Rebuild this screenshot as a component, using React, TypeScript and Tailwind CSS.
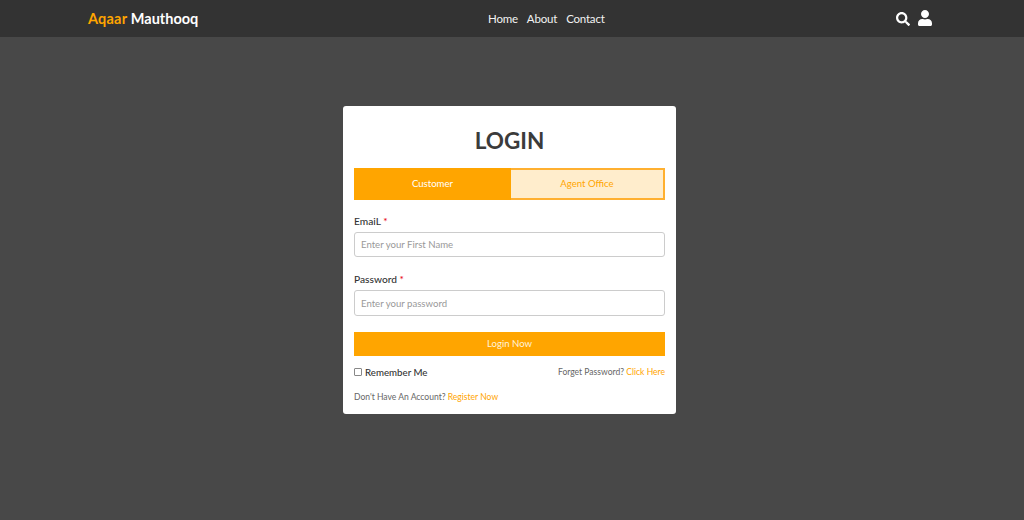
import { FaSearch, FaUser } from "react-icons/fa";

function Label({ text }: { text: string }) {
  return (
    <label className="block text-[10.2px] leading-[16px] font-medium text-[#333]">
      {text} <span className="text-red-600">*</span>
    </label>
  );
}

export default function App() {
  return (
    <div className="min-h-[520px] bg-[#484848] font-['Lato',sans-serif]">
      {/* Navbar */}
      <header className="flex h-[37px] items-center bg-[#333333] pl-[88px] pr-[91px]">
        <div className="w-[340px] text-[14.5px] font-bold text-white">
          <span className="tracking-[0.2px] text-[#ffa500]">Aqaar</span> Mauthooq
        </div>
        <nav className="ml-[60px] flex gap-[9px] text-[11.5px] tracking-[-0.2px] text-[#f2f2f2]">
          <a>Home</a>
          <a>About</a>
          <a>Contact</a>
        </nav>
        <div className="ml-auto flex items-center gap-[7px] text-white">
          <FaSearch size={14} />
          <FaUser size={16} className="-mt-[2px]" />
        </div>
      </header>

      {/* Login card */}
      <main className="flex justify-center pt-[69px] pr-[5px]">
        <div className="h-[308px] w-[333px] rounded-[3px] bg-white px-[11px]">
          <h1 className="pt-[21px] text-center text-[22.5px] leading-[28px] font-bold text-[#3b3b3b]">LOGIN</h1>

          <div className="mt-[13px] flex h-[32px] border-2 border-[#ffb030] text-[9.6px]">
            <div className="-m-[2px] flex w-[157px] items-center justify-center bg-[#ffa500] pt-[1px] text-white">Customer</div>
            <div className="ml-[2px] flex flex-1 items-center justify-center bg-[#ffedcc] pt-[1px] text-[#ffa500]">Agent Office</div>
          </div>

          <div className="mt-[13px]">
            <Label text="EmaiL" />
            <input
              className="mt-[3px] h-[25px] w-full rounded-[3px] border border-[#ccc] px-[6px] text-[9.6px] placeholder:text-[#999]"
              placeholder="Enter your First Name"
            />
          </div>
          <div className="mt-[14px]">
            <Label text="Password" />
            <input
              className="mt-[3px] h-[26px] w-full rounded-[3px] border border-[#ccc] px-[6px] text-[9.6px] placeholder:text-[#999]"
              placeholder="Enter your password"
            />
          </div>

          <button className="mt-[16px] h-[24px] w-full bg-[#ffa500] text-[9.6px] text-[#fff3dc]">Login Now</button>

          <div className="mt-[8px] flex h-[16px] items-center justify-between">
            <label className="flex items-center gap-[3px] text-[9.7px] font-medium text-[#333]">
              <input type="checkbox" className="h-[8px] w-[8px] appearance-none rounded-[1px] border border-[#888]" />
              Remember Me
            </label>
            <p className="text-[8.55px] text-[#666]">
              Forget Password? <a className="text-[#ffa500]">Click Here</a>
            </p>
          </div>
          <p className="mt-[10px] text-[8.55px] leading-[14px] text-[#666]">
            Don't Have An Account? <a className="text-[#ffa500]">Register Now</a>
          </p>
        </div>
      </main>
    </div>
  );
}
